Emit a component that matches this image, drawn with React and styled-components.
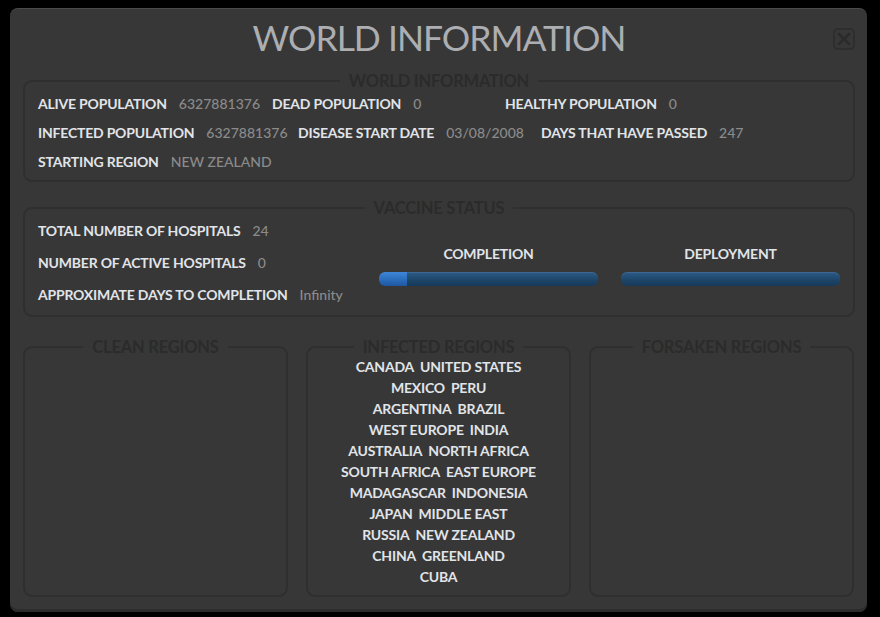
import React from "react";
import styled, { createGlobalStyle } from "styled-components";

const GlobalStyle = createGlobalStyle`
html, body {
    margin: 0;
    padding: 0;
    background: #000;
}
body {
    font-family: Lato, "Open Sans", "Liberation Sans", sans-serif;
}
`

const Window = styled.div`
position: relative;
box-sizing: border-box;
width: 857px;
height: 604px;
margin: 8px 0 0 10px;
padding: 0 12px 0 13px;
background: #373737;
border-radius: 8px;
border-top: 1px solid #4a4a4a;
box-shadow: inset 0 -3px 0 #2c2c2c;
display: flex;
flex-direction: column;
`
const Title = styled.h1`
margin: 0;
height: 64px;
padding-top: 9px;
box-sizing: border-box;
text-align: center;
font-size: 35.5px;
line-height: 40px;
font-weight: 400;
letter-spacing: -1px;
color: #acaeb1;
`
const CloseButton = styled.button`
position: absolute;
top: 19px;
right: 12px;
width: 22px;
height: 22px;
padding: 0;
border: 2px solid #2e2e2e;
border-radius: 5px;
background: transparent;
display: flex;
align-items: center;
justify-content: center;
cursor: pointer;
`
const Box = styled.fieldset`
box-sizing: border-box;
margin: 0;
min-width: 0;
padding: ${(p) => p.pad || "0 13px 4px"};
border: 2px solid #2f2f2f;
border-radius: 9px;
height: ${(p) => p.h || "auto"};
`
const Legend = styled.legend`
margin: 0 auto;
padding: 0 9px;
font-size: 16.5px;
line-height: 16px;
font-weight: 700;
color: #2b2b2b;
letter-spacing: -0.2px;
`
const InfoRow = styled.div`
display: flex;
align-items: center;
height: 29px;
`
const Item = styled.div`
display: flex;
align-items: center;
gap: 12px;
width: ${(p) => (p.w ? p.w + "px" : "auto")};
flex-shrink: 0;
`
const Label = styled.span`
font-size: 14px;
font-weight: 700;
color: #e1e4e8;
letter-spacing: -0.2px;
white-space: nowrap;
`
const Value = styled.span`
font-size: 14px;
font-weight: 500;
color: #8b8b8b;
white-space: nowrap;
`
const VaccineBody = styled.div`
display: flex;
`
const HospitalList = styled.div`
flex: 1;
margin-top: -2px;
`
const HospitalRow = styled.div`
display: flex;
align-items: center;
gap: 12px;
height: 32px;
`
const Meters = styled.div`
display: flex;
gap: 23px;
padding-top: 29px;
`
const Meter = styled.div`
width: 219px;
display: flex;
flex-direction: column;
align-items: center;
gap: 10px;
`
const Track = styled.div`
width: 100%;
height: 14px;
border-radius: 6px;
background: linear-gradient(#2d5c88, #1c4467 60%, #173a5a);
box-shadow: inset 0 1px 0 rgba(255, 255, 255, 0.08);
overflow: hidden;
`
const Fill = styled.div`
height: 100%;
border-radius: 6px 0 0 6px;
background: linear-gradient(#3f86d8, #2a6cbc 55%, #1f58a0);
`
const Spacer = styled.div`
height: ${(p) => p.h}px;
flex-shrink: 0;
`
const RegionGrid = styled.div`
display: grid;
grid-template-columns: repeat(3, 265px);
gap: 18px;
`
const RegionLines = styled.div`
display: flex;
flex-direction: column;
align-items: center;
padding-top: 1px;
`
const RegionLine = styled.div`
display: flex;
gap: 6px;
height: 21px;
line-height: 21px;
font-size: 14px;
font-weight: 700;
color: #e1e4e8;
letter-spacing: -0.2px;
white-space: nowrap;
`

const worldRows = [
    [
        { label: "ALIVE POPULATION", value: "6327881376", w: 234 },
        { label: "DEAD POPULATION", value: "0", w: 233 },
        { label: "HEALTHY POPULATION", value: "0" },
    ],
    [
        { label: "INFECTED POPULATION", value: "6327881376", w: 260 },
        { label: "DISEASE START DATE", value: "03/08/2008", w: 243 },
        { label: "DAYS THAT HAVE PASSED", value: "247" },
    ],
    [{ label: "STARTING REGION", value: "NEW ZEALAND" }],
];

const hospitals = [
    { label: "TOTAL NUMBER OF HOSPITALS", value: "24" },
    { label: "NUMBER OF ACTIVE HOSPITALS", value: "0" },
    { label: "APPROXIMATE DAYS TO COMPLETION", value: "Infinity" },
];

const infected = [
    "CANADA", "UNITED STATES", "MEXICO", "PERU", "ARGENTINA", "BRAZIL",
    "WEST EUROPE", "INDIA", "AUSTRALIA", "NORTH AFRICA", "SOUTH AFRICA",
    "EAST EUROPE", "MADAGASCAR", "INDONESIA", "JAPAN", "MIDDLE EAST",
    "RUSSIA", "NEW ZEALAND", "CHINA", "GREENLAND", "CUBA",
];

const pairs = (list) => {
    const out = [];
    for (let i = 0; i < list.length; i += 2) out.push(list.slice(i, i + 2));
    return out;
};

const regions = [
    { title: "CLEAN REGIONS", list: [] },
    { title: "INFECTED REGIONS", list: infected },
    { title: "FORSAKEN REGIONS", list: [] },
];

const meters = [
    { title: "COMPLETION", pct: 12.8 },
    { title: "DEPLOYMENT", pct: 0 },
];

export default function App() {
    return (
        <>
            <GlobalStyle />
            <Window>
                <Title>WORLD INFORMATION</Title>
                <CloseButton aria-label="close">
                    <svg width="14" height="14" viewBox="0 0 14 14">
                        <path d="M2 2 L12 12 M12 2 L2 12" stroke="#2b2b2b" strokeWidth="2.6" strokeLinecap="round" />
                    </svg>
                </CloseButton>

                <Box>
                    <Legend>WORLD INFORMATION</Legend>
                    {worldRows.map((row, i) => (
                        <InfoRow key={i}>
                            {row.map((it) => (
                                <Item key={it.label} w={it.w}>
                                    <Label>{it.label}</Label>
                                    <Value>{it.value}</Value>
                                </Item>
                            ))}
                        </InfoRow>
                    ))}
                </Box>

                <Spacer h={18} />

                <Box pad="0 13px 5px">
                    <Legend>VACCINE STATUS</Legend>
                    <VaccineBody>
                        <HospitalList>
                            {hospitals.map((h) => (
                                <HospitalRow key={h.label}>
                                    <Label>{h.label}</Label>
                                    <Value>{h.value}</Value>
                                </HospitalRow>
                            ))}
                        </HospitalList>
                        <Meters>
                            {meters.map((m) => (
                                <Meter key={m.title}>
                                    <Label>{m.title}</Label>
                                    <Track>
                                        <Fill style={{ width: m.pct + "%" }} />
                                    </Track>
                                </Meter>
                            ))}
                        </Meters>
                    </VaccineBody>
                </Box>

                <Spacer h={22} />

                <RegionGrid>
                    {regions.map((r) => (
                        <Box key={r.title} h="258px" pad="0 4px">
                            <Legend>{r.title}</Legend>
                            <RegionLines>
                                {pairs(r.list).map((p) => (
                                    <RegionLine key={p[0]}>
                                        {p.map((name) => (
                                            <span key={name}>{name}</span>
                                        ))}
                                    </RegionLine>
                                ))}
                            </RegionLines>
                        </Box>
                    ))}
                </RegionGrid>
            </Window>
        </>
    );
}
